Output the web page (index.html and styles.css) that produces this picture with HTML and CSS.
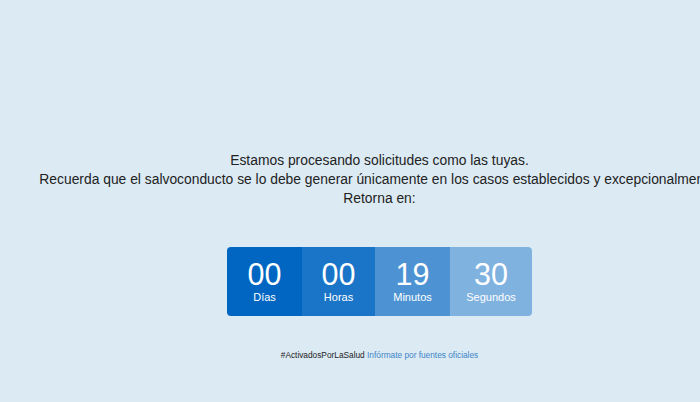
FILE: index.html
```html
<!DOCTYPE html>
<html lang="es">
<head>
<meta charset="utf-8">
<title>Salvoconducto</title>
<link rel="stylesheet" href="styles.css">
</head>
<body>
<div class="page">
  <div class="message">
    <p>Estamos procesando solicitudes como las tuyas.</p>
    <p>Recuerda que el salvoconducto se lo debe generar únicamente en los casos establecidos y excepcionalmente.</p>
    <p>Retorna en:</p>
  </div>
  <div class="countdown">
    <div class="unit u1"><span class="num">00</span><span class="lbl">Días</span></div>
    <div class="unit u2"><span class="num">00</span><span class="lbl">Horas</span></div>
    <div class="unit u3"><span class="num">19</span><span class="lbl">Minutos</span></div>
    <div class="unit u4"><span class="num">30</span><span class="lbl">Segundos</span></div>
  </div>
  <p class="footer">#ActivadosPorLaSalud <a href="#">Infórmate por fuentes oficiales</a></p>
</div>
</body>
</html>
```

FILE: styles.css
```css
html, body {
  margin: 0;
  padding: 0;
  overflow: hidden;
  background: #dceaf4;
  height: 100%;
}
body {
  font-family: "Liberation Sans", Arial, sans-serif;
  color: #222;
}
.page {
  width: 759px;
  padding-top: 151px;
  display: flex;
  flex-direction: column;
  align-items: center;
  text-align: center;
}
.message p {
  margin: 0;
  font-size: 13.85px;
  line-height: 19px;
  white-space: nowrap;
}
.countdown {
  margin-top: 39px;
  display: flex;
  border-radius: 4px;
  overflow: hidden;
}
.unit {
  display: flex;
  flex-direction: column;
  align-items: center;
  padding: 11px 14px 12px;
  color: #fff;
}
.u1 { background: #0066c2; width: 47px; }
.u2 { background: #1a75c8; width: 45px; }
.u3 { background: #4d93d4; width: 47px; }
.u4 { background: #80b2e0; width: 54px; }
.num {
  font-size: 30.5px;
  line-height: 32px;
}
.lbl {
  font-size: 11px;
  line-height: 14px;
}
.footer {
  margin: 34px 0 0;
  font-size: 8.3px;
  line-height: 10px;
  color: #222;
}
.footer a {
  color: #3d85c6;
  text-decoration: none;
}
```
